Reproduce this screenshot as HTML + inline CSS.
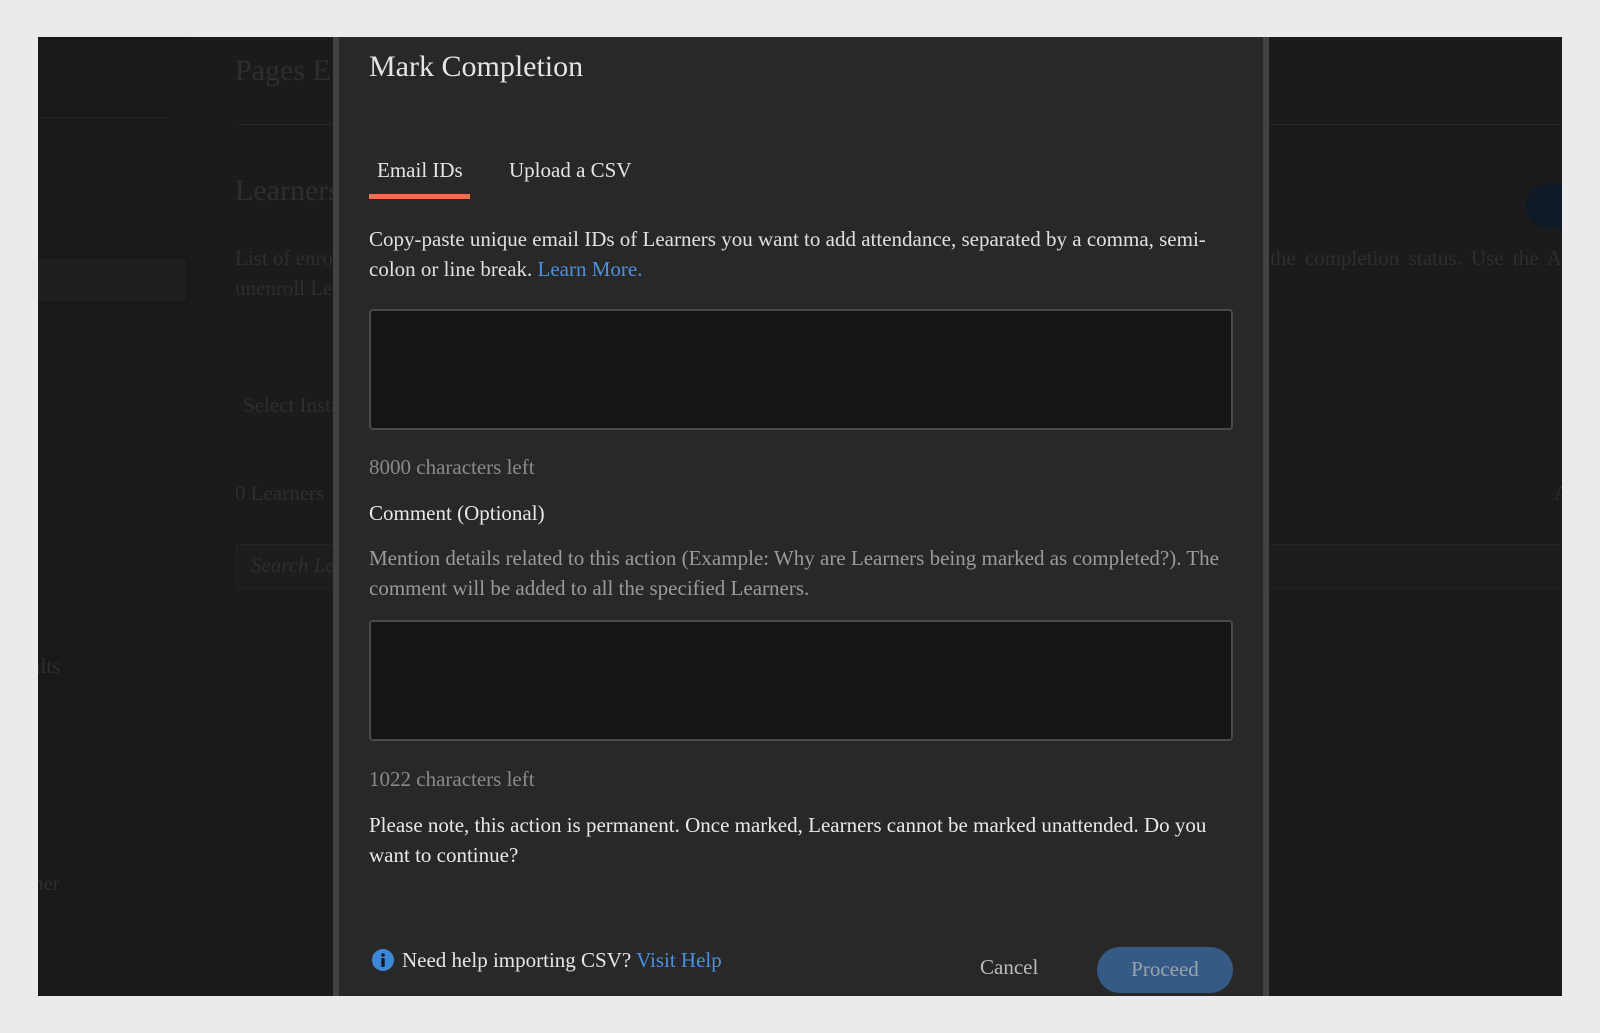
<!DOCTYPE html>
<html><head><meta charset="utf-8"><style>
*{margin:0;padding:0;box-sizing:border-box}
body{width:1600px;height:1033px;background:#ebebeb;position:relative;overflow:hidden;font-family:"Liberation Serif",serif}
.bg{position:absolute;left:38px;top:37px;width:1524px;height:959px;background:#1b1b1b;overflow:hidden}
.a{position:absolute;white-space:nowrap;color:#2e2e2e}
.modal{position:absolute;left:333px;top:37px;width:936px;height:959px;background:#282828;border-left:6px solid #424242;border-right:6px solid #424242}
.t{position:absolute;white-space:nowrap;font-size:21px}
.ta{position:absolute;left:30px;width:864px;background:#151515;border:2px solid #4a4a4a;border-radius:4px}
</style></head><body>
<div class="bg">
 <div style="position:absolute;left:0;top:0;width:152px;height:959px;background:#191919"></div>
 <div style="position:absolute;left:0;top:80px;width:130px;height:1px;background:#262626"></div>
 <div style="position:absolute;left:0;top:222px;width:148px;height:42px;background:#1f1f1f"></div>
 <div class="a" style="left:197px;top:17px;font-size:30px">Pages E</div>
 <div style="position:absolute;left:199px;top:87px;width:1400px;height:1px;background:#262626"></div>
 <div class="a" style="left:197px;top:137px;font-size:30px">Learners</div>
 <div class="a" style="left:197px;top:206px;font-size:21px;line-height:30px">List of enrolled<br>unenroll Learners</div>
 <div class="a" style="left:1232px;top:206px;font-size:21px;line-height:30px;word-spacing:4px">the completion status. Use the Ac</div>
 <div style="position:absolute;left:1488px;top:147px;width:60px;height:45px;border-radius:22px;background:#0f1a26"></div>
 <div class="a" style="left:205px;top:356px;font-size:21px">Select Instance</div>
 <div class="a" style="left:197px;top:444px;font-size:21px">0 Learners</div>
 <div class="a" style="left:1516px;top:444px;font-size:21px">A</div>
 <div style="position:absolute;left:198px;top:507px;width:1400px;height:45px;border:1px solid #242424;background:#1d1d1d"></div>
 <div class="a" style="left:213px;top:516px;font-size:21px;font-style:italic">Search Learners</div>
 <div class="a" style="left:-8px;top:617px;font-size:21px">ults</div>
 <div class="a" style="left:-8px;top:663px;font-size:21px">s</div>
 <div class="a" style="left:-12px;top:834px;font-size:21px">rner</div>
</div>
<div class="modal">
 <div class="t" style="left:30px;top:13px;font-size:30px;color:#e4e4e4">Mark Completion</div>
 <div class="t" style="left:38px;top:121px;color:#e4e4e4">Email IDs</div>
 <div class="t" style="left:170px;top:121px;color:#e4e4e4">Upload a CSV</div>
 <div style="position:absolute;left:30px;top:157px;width:101px;height:5px;background:#f0704a"></div>
 <div class="t" style="left:30px;top:187px;line-height:30px;color:#e0e0e0;white-space:normal;width:870px">Copy-paste unique email IDs of Learners you want to add attendance, separated by a comma, semi-colon or line break. <span style="color:#4a90e2">Learn More.</span></div>
 <div class="ta" style="top:272px;height:121px"></div>
 <div class="t" style="left:30px;top:418px;color:#8a8a8a">8000 characters left</div>
 <div class="t" style="left:30px;top:464px;color:#e8e8e8">Comment (Optional)</div>
 <div class="t" style="left:30px;top:506px;line-height:30px;color:#9a9a9a;white-space:normal;width:870px">Mention details related to this action (Example: Why are Learners being marked as completed?). The comment will be added to all the specified Learners.</div>
 <div class="ta" style="top:583px;height:121px"></div>
 <div class="t" style="left:30px;top:730px;color:#8a8a8a">1022 characters left</div>
 <div class="t" style="left:30px;top:773px;line-height:30px;color:#e8e8e8;white-space:normal;width:870px">Please note, this action is permanent. Once marked, Learners cannot be marked unattended. Do you want to continue?</div>
 <svg style="position:absolute;left:33px;top:912px" width="22" height="22" viewBox="0 0 22 22"><circle cx="11" cy="11" r="11" fill="#3d87d8"/><circle cx="11" cy="6" r="1.8" fill="#1a1a1a"/><rect x="9.3" y="9" width="3.4" height="9" rx="1" fill="#1a1a1a"/></svg>
 <div class="t" style="left:63px;top:911px;color:#e6e6e6">Need help importing CSV? <span style="color:#4a90e2">Visit Help</span></div>
 <div class="t" style="left:641px;top:918px;color:#bbbbbb">Cancel</div>
 <div style="position:absolute;left:758px;top:910px;width:136px;height:46px;border-radius:23px;background:#355a85;color:#9aa4ad;font-size:21px;text-align:center;line-height:44px">Proceed</div>
</div>
</body></html>
